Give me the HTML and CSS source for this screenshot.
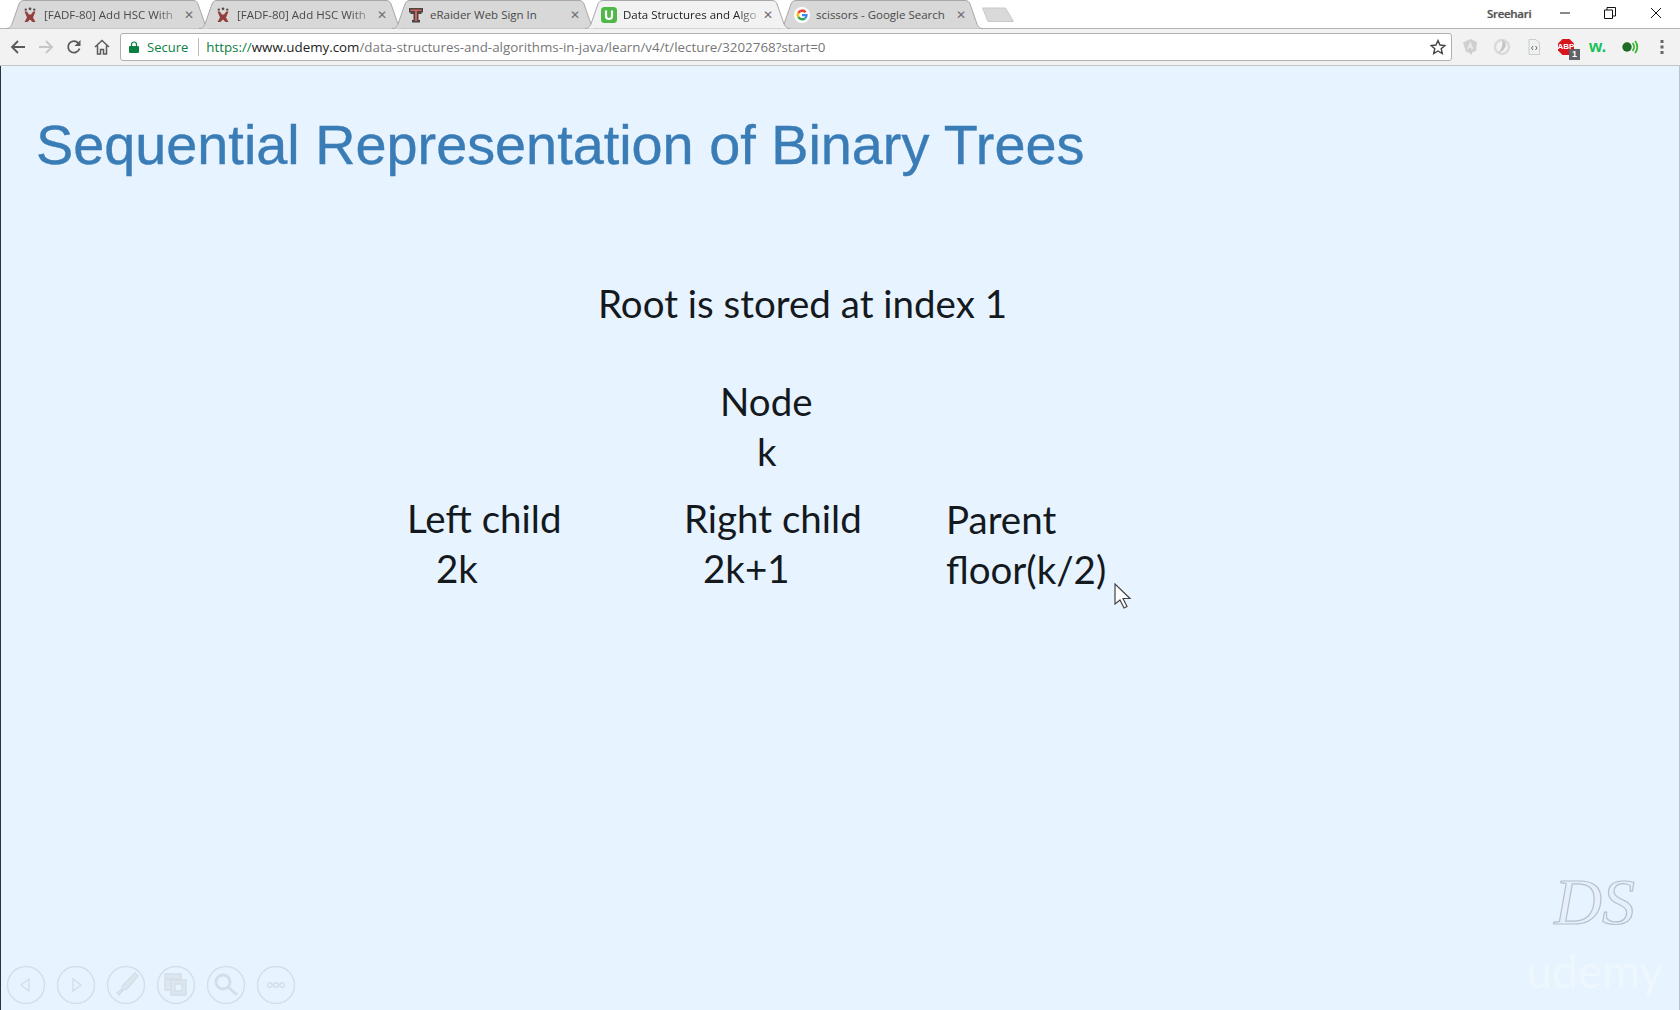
FILE: index.html
```html
<!DOCTYPE html>
<html lang="en">
<head>
<meta charset="utf-8">
<title>Data Structures and Algorithms</title>
<link rel="stylesheet" href="styles.css">
</head>
<body>
<div class="browser">
  <header class="tabstrip">
    <div class="tabs">
      <div class="tab">
        <svg class="tab-shape" viewBox="0 0 205 29"><path d="M0 28.5C4 28.5 5 26 6 24L13 4C14 2 15 .5 18 .5H187C190 .5 191 2 192 4L199 24C200 26 201 28.5 205 28.5"/></svg>
        <svg class="favicon" viewBox="0 0 16 16"><circle cx="8" cy="1.800" r="1.400" fill="#5c4a4a"/><circle cx="3.800" cy="2.600" r="1.200" fill="#5c4a4a"/><circle cx="12.200" cy="2.600" r="1.200" fill="#5c4a4a"/><path d="M2.500 4.500h2.300L7 7.500h2l2.200-3h2.300l-2.500 6 2.500 4.500h-3L8 12.500 5.500 15h-3L5 10.500z" fill="#93413d"/></svg>
        <span class="tab-title tab-fade">[FADF-80] Add HSC With</span>
        <span class="tab-close">✕</span>
      </div>
      <div class="tab">
        <svg class="tab-shape" viewBox="0 0 205 29"><path d="M0 28.5C4 28.5 5 26 6 24L13 4C14 2 15 .5 18 .5H187C190 .5 191 2 192 4L199 24C200 26 201 28.5 205 28.5"/></svg>
        <svg class="favicon" viewBox="0 0 16 16"><circle cx="8" cy="1.800" r="1.400" fill="#5c4a4a"/><circle cx="3.800" cy="2.600" r="1.200" fill="#5c4a4a"/><circle cx="12.200" cy="2.600" r="1.200" fill="#5c4a4a"/><path d="M2.500 4.500h2.300L7 7.500h2l2.200-3h2.300l-2.500 6 2.500 4.500h-3L8 12.500 5.500 15h-3L5 10.500z" fill="#93413d"/></svg>
        <span class="tab-title tab-fade">[FADF-80] Add HSC With</span>
        <span class="tab-close">✕</span>
      </div>
      <div class="tab">
        <svg class="tab-shape" viewBox="0 0 205 29"><path d="M0 28.5C4 28.5 5 26 6 24L13 4C14 2 15 .5 18 .5H187C190 .5 191 2 192 4L199 24C200 26 201 28.5 205 28.5"/></svg>
        <svg class="favicon" viewBox="0 0 16 16"><path d="M1 1h14v4.500h-1.500V7h-3v6H12v2.500H4V13h1.500V7h-3V5.500H1z" fill="#4d4444"/><path d="M2.500 2.500h11V4H9v10H7V4H2.500z" fill="#d4605a"/></svg>
        <span class="tab-title">eRaider Web Sign In</span>
        <span class="tab-close">✕</span>
      </div>
      <div class="tab tab-active">
        <svg class="tab-shape" viewBox="0 0 205 29"><path d="M0 28.5C4 28.5 5 26 6 24L13 4C14 2 15 .5 18 .5H187C190 .5 191 2 192 4L199 24C200 26 201 28.5 205 28.5"/></svg>
        <svg class="favicon" viewBox="0 0 16 16"><rect width="16" height="16" rx="3.500" fill="#4fb848"/><path d="M5 3.500V9a3 3 0 0 0 6 0V3.500" fill="none" stroke="#fff" stroke-width="2.200"/></svg>
        <span class="tab-title tab-fade">Data Structures and Algo</span>
        <span class="tab-close">✕</span>
      </div>
      <div class="tab">
        <svg class="tab-shape" viewBox="0 0 205 29"><path d="M0 28.5C4 28.5 5 26 6 24L13 4C14 2 15 .5 18 .5H187C190 .5 191 2 192 4L199 24C200 26 201 28.5 205 28.5"/></svg>
        <svg class="favicon" viewBox="0 0 16 16"><circle cx="8" cy="8" r="8" fill="#fff"/><path d="M12.500 4.400A5.600 5.600 0 0 0 3.300 5.200L5.300 6.700A3.200 3.200 0 0 1 10.500 6z" fill="#ea4335"/><path d="M3.300 5.200a5.600 5.600 0 0 0 0 5.600l2-1.500a3.200 3.200 0 0 1 0-2.600z" fill="#fbbc05"/><path d="M3.300 10.800a5.600 5.600 0 0 0 8.700 1.100l-1.900-1.500a3.200 3.200 0 0 1-4.800-1.100z" fill="#34a853"/><path d="M13.600 7H8v2.200h3.200a3 3 0 0 1-1.100 1.200l1.900 1.500c1.200-1.100 1.800-2.900 1.600-4.900z" fill="#4285f4"/></svg>
        <span class="tab-title">scissors - Google Search</span>
        <span class="tab-close">✕</span>
      </div>
      <svg class="new-tab" viewBox="0 0 34 16"><path d="M1.500 1H24.500L32.500 14.500H7z" fill="#d9d9d9" stroke="#c9c9c9"/></svg>
    </div>
    <div class="window-bar">
      <span class="profile">Sreehari</span>
      <svg class="win-btn win-min" viewBox="0 0 12 12"><path d="M1 6h10" stroke="#111"/></svg>
      <svg class="win-btn win-restore" viewBox="0 0 12 12"><path d="M.5 3h8v8.500h-8zM3 3V.5h8.500V9H8.500" fill="none" stroke="#111"/></svg>
      <svg class="win-btn win-close" viewBox="0 0 12 12"><path d="M1 1l10 10M11 1L1 11" stroke="#111"/></svg>
    </div>
  </header>

  <nav class="toolbar">
    <svg class="nav-icon" viewBox="0 0 16 16"><path d="M15 8H2M8 2L2 8l6 6" fill="none" stroke="#5a5a5a" stroke-width="1.800"/></svg>
    <svg class="nav-icon" viewBox="0 0 16 16"><path d="M1 8h13M8 2l6 6-6 6" fill="none" stroke="#c6c6c6" stroke-width="1.800"/></svg>
    <svg class="nav-icon" viewBox="0 0 16 16"><path d="M13.500 9.500A5.800 5.800 0 1 1 12.300 4" fill="none" stroke="#5a5a5a" stroke-width="1.800"/><path d="M14.500 1v6h-6z" fill="#5a5a5a"/></svg>
    <svg class="nav-icon" viewBox="0 0 16 16"><path d="M1 8l7-6.500L15 8M3.500 6.500V15h3V10.500h3V15h3V6.500" fill="none" stroke="#5a5a5a" stroke-width="1.500"/></svg>
    <div class="omnibox">
      <svg class="lock" viewBox="0 0 10 12"><path d="M2.500 5V3.500a2.500 2.500 0 0 1 5 0V5" fill="none" stroke="#0b8043" stroke-width="1.200"/><rect y="5" width="10" height="7" rx="1" fill="#0b8043"/></svg>
      <span class="secure">Secure</span>
      <span class="divider"></span>
      <span class="url"><span class="url-scheme">https://</span><span class="url-host">www.udemy.com</span>/data-structures-and-algorithms-in-java/learn/v4/t/lecture/3202768?start=0</span>
      <svg class="star" viewBox="0 0 16 16"><path d="M8 1.500l2 4.500 4.900.5-3.700 3.200 1.100 4.800L8 12l-4.300 2.500 1.100-4.800L1.100 6.500 6 6z" fill="none" stroke="#444" stroke-width="1.400"/></svg>
    </div>
    <div class="extensions">
      <svg class="ext ext-soft" viewBox="0 0 18 18"><path d="M2 4.500L9.500 1 16 4l-1 9-3.500 1-1 3-2.500-2.500-3-.5z" fill="#cfcfcf"/><path d="M9.500 3l3 8.500h-2L10 10H8l-1 1.500H5.500z" fill="#e6e6e6"/></svg>
      <svg class="ext ext-soft" viewBox="0 0 18 18"><circle cx="9" cy="9" r="7" fill="none" stroke="#dadada" stroke-width="2.500"/><path d="M9 2c4 1 5 6 2 9-1.500 2-4 3.500-6 4 3-3 5.500-8 4-13z" fill="#c4c4c4"/></svg>
      <svg class="ext" viewBox="0 0 18 18"><path d="M4 1.500h7l3.500 3.500v11.500H4z" fill="#eef1ee" stroke="#c8d0c8"/><path d="M8 8L6.500 10 8 12M10.500 8L12 10l-1.500 2" fill="none" stroke="#667" /></svg>
      <div class="ext ext-abp">
        <svg class="abp-sign" viewBox="0 0 18 18"><path d="M5.500 1h7L17 5.500v7L12.500 17h-7L1 12.500v-7z" fill="#d8141c"/></svg>
        <span class="abp-text">ABP</span>
        <span class="abp-badge">1</span>
      </div>
      <span class="ext ext-w">w.</span>
      <svg class="ext" viewBox="0 0 18 18"><circle cx="6" cy="9" r="4.700" fill="#1e6b26"/><path d="M11.500 5a6 6 0 0 1 0 8M14 3a9 9 0 0 1 0 12" fill="none" stroke="#35b82d" stroke-width="1.800"/></svg>
      <svg class="ext" viewBox="0 0 18 18"><rect x="7.500" y="2" width="3" height="3" fill="#666"/><rect x="7.500" y="7.500" width="3" height="3" fill="#666"/><rect x="7.500" y="13" width="3" height="3" fill="#666"/></svg>
    </div>
  </nav>

  <main class="slide">
    <h1 class="slide-title">Sequential Representation of Binary Trees</h1>
    <p class="root-line">Root is stored at index 1</p>
    <div class="node-block"><div>Node</div><div class="node-k">k</div></div>
    <div class="relations">
      <div class="rel rel-left"><div>Left child</div><div class="rel-val">2k</div></div>
      <div class="rel rel-right"><div>Right child</div><div class="rel-val">2k+1</div></div>
      <div class="rel rel-parent"><div>Parent</div><div>floor(k/2)</div></div>
    </div>

    <svg class="pointer" viewBox="0 0 18 26"><path d="M1 1v20l5-4 4 8 3-1.500-4-8h7z" fill="#fff" stroke="#444" stroke-width="1.200"/></svg>

    <div class="player-controls">
      <svg class="pc pc-line" viewBox="0 0 38 38"><circle cx="19" cy="19" r="18.500"/><path d="M22 13l-8 6 8 6z"/></svg>
      <svg class="pc pc-line" viewBox="0 0 38 38"><circle cx="19" cy="19" r="18.500"/><path d="M16 13l8 6-8 6z"/></svg>
      <svg class="pc" viewBox="0 0 38 38"><circle cx="19" cy="19" r="18.500"/><path d="M28 7l3 3-11 13-4 1-4 5-2-2 5-4 1-4z"/></svg>
      <svg class="pc" viewBox="0 0 38 38"><circle cx="19" cy="19" r="18.500"/><path d="M8 8h16v5H8zM8 13h6v11H8zM14 14h15v15H14zM18 18h7v7h-7z" fill-rule="evenodd"/></svg>
      <svg class="pc pc-thick" viewBox="0 0 38 38"><circle cx="19" cy="19" r="18.500" class="pc-ring"/><circle cx="16" cy="16" r="7"/><path d="M21 21l9 8"/></svg>
      <svg class="pc pc-line" viewBox="0 0 38 38"><circle cx="19" cy="19" r="18.500"/><circle cx="13" cy="19" r="2.200"/><circle cx="19" cy="19" r="2.200"/><circle cx="25" cy="19" r="2.200"/></svg>
    </div>

    <div class="watermark">
      <span class="wm-ds">DS</span>
      <span class="wm-udemy">udemy</span>
    </div>
  </main>
</div>
</body>
</html>
```

FILE: styles.css
```css
* { box-sizing: border-box; }
html, body { margin: 0; padding: 0; }
body { width: 1680px; height: 1010px; overflow: hidden; background: #e7f3fe; }
.browser { display: flex; flex-direction: column; height: 1010px; font-family: "Open Sans", "Liberation Sans", sans-serif; }

.tabstrip { display: flex; justify-content: space-between; height: 29px; background: #fff; border-bottom: 1px solid #b4b4b4; }
.tabs { display: flex; align-items: flex-start; padding-left: 6px; }
.tab { position: relative; display: flex; align-items: center; width: 205px; height: 29px; margin-right: -12px; padding: 0 15px 0 16px; font-size: 11.5px; color: #4a4a4a; }
.tab-shape { position: absolute; left: 0; top: 0; width: 205px; height: 29px; }
.tab-shape path { fill: #d8d8d8; stroke: #a8a8a8; stroke-width: 1; }
.tab-active { z-index: 2; color: #222; }
.tab-active .tab-shape path { fill: #f2f2f2; }
.favicon { position: relative; flex: none; width: 16px; height: 16px; margin-right: 6px; }
.tab-title { position: relative; flex: 1; white-space: nowrap; }
.tab-fade { -webkit-mask-image: linear-gradient(90deg, #000 82%, rgba(0,0,0,.15)); mask-image: linear-gradient(90deg, #000 82%, rgba(0,0,0,.15)); }
.tab-close { position: relative; flex: none; width: 14px; font-size: 12px; font-weight: bold; font-family: "DejaVu Sans", sans-serif; color: #707070; text-align: center; }
.new-tab { flex: none; width: 34px; height: 16px; margin: 7px 0 0 10px; }

.window-bar { display: flex; align-items: center; height: 26px; }
.profile { width: 62px; font-size: 11.5px; font-weight: 600; color: #555; letter-spacing: -.3px; text-shadow: 0 0 1px #999; }
.win-btn { flex: none; width: 12px; height: 12px; }
.win-min { margin-left: 10px; }
.win-restore { margin-left: 33px; }
.win-close { margin-left: 34px; margin-right: 18px; }

.toolbar { display: flex; align-items: center; height: 37px; padding: 0 6px 0 10px; background: #f2f2f2; border-bottom: 1px solid #c4c4c4; }
.nav-icon { flex: none; width: 16px; height: 16px; margin-right: 12px; }
.omnibox { display: flex; flex: none; align-items: center; width: 1332px; height: 28px; margin-left: -2px; padding: 0 5px 0 8px; background: #fff; border: 1px solid #b0b0b0; border-radius: 3px; font-size: 13px; }
.lock { flex: none; width: 10px; height: 12px; margin-right: 8px; }
.secure { color: #0b8043; }
.divider { width: 1px; height: 18px; margin: 0 7px 0 10px; background: #bbb; }
.url { flex: 1; font-size: 13.35px; color: #777; white-space: nowrap; }
.url-scheme { color: #0b8043; }
.url-host { color: #222; }
.star { flex: none; width: 16px; height: 16px; }
.extensions { display: flex; flex: none; align-items: center; gap: 14px; margin-left: 9px; }
.ext { display: block; flex: none; width: 18px; height: 18px; }
.ext-soft { filter: blur(.4px); }
.ext-abp { position: relative; }
.abp-sign { display: block; width: 18px; height: 18px; }
.abp-text { position: absolute; left: 0; top: 4px; width: 18px; font: bold 8px/10px "Liberation Sans", sans-serif; color: #fff; text-align: center; }
.abp-badge { position: absolute; left: 12px; top: 11px; width: 11px; height: 11px; background: #5f6368; color: #fff; font: bold 9px/11px "Liberation Sans", sans-serif; text-align: center; }
.ext-w { font: bold 17px/18px "Liberation Sans", sans-serif; color: #12c25a; white-space: nowrap; }

.slide { position: relative; flex: 1; padding: 44px 0 0 35px; background: #e7f3fe; border-left: 1px solid #30333a; border-right: 1px solid #b8c4cc; font-family: Lato, "Open Sans", sans-serif; font-size: 38.5px; line-height: 50px; color: #14191e; }
.slide-title { margin: 0; font: 400 55.8px/70px "Liberation Sans", Arial, sans-serif; color: #3a7cb6; -webkit-text-stroke: .4px #3a7cb6; }
.root-line { margin: 98px 0 0 562px; }
.node-block { margin: 48px 0 0 684px; }
.node-k { padding-left: 37px; }
.relations { display: flex; margin: 18px 0 0 371px; line-height: 49.5px; }
.rel-left { width: 277px; }
.rel-right { width: 262px; }
.rel-val { padding-left: 29px; }
.rel-right .rel-val { padding-left: 19px; }
.rel-parent { margin-top: 1px; }

.pointer { position: absolute; left: 1113px; top: 517px; width: 18px; height: 26px; }

.player-controls { position: absolute; left: 6px; bottom: 6px; display: flex; gap: 12px; }
.pc { width: 38px; height: 38px; fill: #dde6ee; stroke: #d3dee8; stroke-width: 1.400; }
.pc circle:first-child { fill: none; }
.pc-line circle, .pc-line path { fill: none; }
.pc-thick circle, .pc-thick path { fill: none; stroke-width: 3; }
.pc-thick .pc-ring { stroke-width: 1.400; }

.watermark { position: absolute; right: 16px; bottom: 14px; display: flex; flex-direction: column; align-items: center; }
.wm-ds { margin-bottom: 9px; font: italic 400 66px/70px "Liberation Serif", serif; color: #e6effa; -webkit-text-stroke: 1.200px #b4c2cf; }
.wm-udemy { font: 400 46px/50px Lato, sans-serif; color: #eef7fe; }
```
